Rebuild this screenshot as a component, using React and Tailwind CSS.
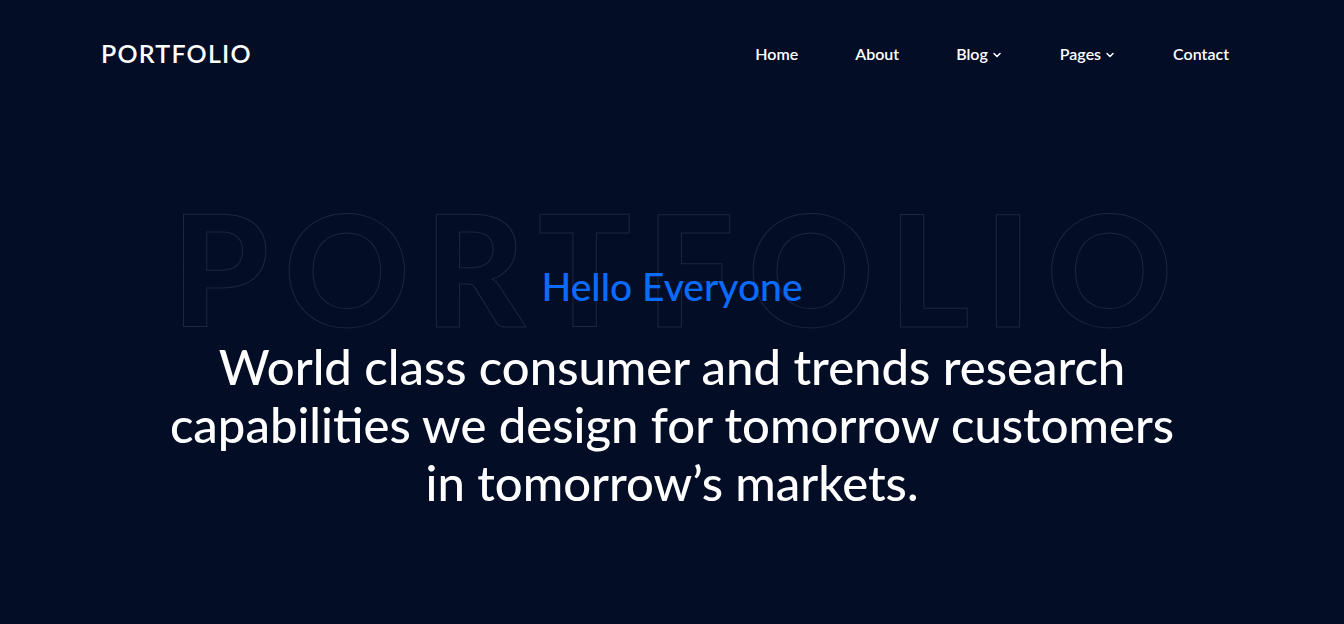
import { ChevronDown } from "lucide-react";

const navItems = [
  { name: "Home" },
  { name: "About" },
  { name: "Blog", drop: true },
  { name: "Pages", drop: true },
  { name: "Contact" },
];

export default function App() {
  return (
    <div
      className="min-h-[624px] w-full bg-[#030d26] text-white overflow-hidden"
      style={{ fontFamily: "Lato, 'Noto Sans', sans-serif" }}
    >
      {/* HEADER */}
      <header className="flex items-center justify-between pl-[101px] pr-[115px] pt-[41px]">
        <a className="text-[25px] font-semibold tracking-[1.2px] leading-none">PORTFOLIO</a>
        <nav className="flex items-center gap-[57px] text-[16px] font-semibold">
          {navItems.map((item) => (
            <a key={item.name} className="flex items-center gap-[3px]">
              {item.name}
              {item.drop && <ChevronDown size={12} strokeWidth={3} className="mt-[2px]" />}
            </a>
          ))}
        </nav>
      </header>

      {/* HERO */}
      <section className="relative flex flex-col items-center pt-[201px] pb-[100px]">
        {/* outlined watermark behind the heading */}
        <div
          className="absolute top-[124px] left-0 right-0 text-center text-[155px] font-black leading-none tracking-[15px] pl-[15px] text-transparent select-none"
          style={{ WebkitTextStroke: "1px #1d2742" }}
        >
          PORTFOLIO
        </div>
        <h3 className="relative text-[39px] font-medium text-[#0a6cff] leading-none">Hello Everyone</h3>
        <h1 className="relative mt-[31px] max-w-[1020px] text-center text-[49px] font-medium leading-[58px]">
          World class consumer and trends research capabilities we design for tomorrow customers in tomorrow’s markets.
        </h1>
      </section>
    </div>
  );
}
